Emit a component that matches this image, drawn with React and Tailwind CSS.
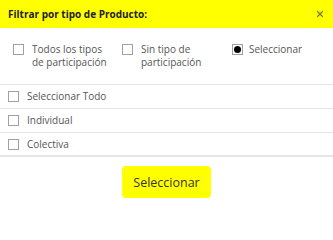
import { X } from "lucide-react";

function Box({ checked }) {
  return (
    <span className="flex h-[11px] w-[11px] shrink-0 items-center justify-center border border-[#a0a0a0] bg-white">
      {checked && <span className="h-[7px] w-[7px] rounded-full bg-black" />}
    </span>
  );
}

export default function App() {
  const rows = ["Seleccionar Todo", "Individual", "Colectiva"];

  return (
    <div className="h-[207px] w-[333px] bg-white text-[10px] leading-[13px] text-[#555] [font-family:'Open_Sans',sans-serif]">
      {/* Header */}
      <div className="flex h-[28px] items-center justify-between bg-[#ffff00] pl-[8px] pr-[8px]">
        <span className="font-bold text-[#222]">Filtrar por tipo de Producto:</span>
        <X className="h-[10px] w-[10px] text-[#7a7a3a]" strokeWidth={3} />
      </div>

      {/* Options */}
      <div className="flex h-[56px] items-start pl-[13px] pt-[15px]">
        <label className="flex w-[109px] items-start gap-[8px]">
          <span className="mt-[1px]"><Box /></span>
          <span>Todos los tipos<br />de participación</span>
        </label>
        <label className="flex w-[110px] items-start gap-[8px]">
          <span className="mt-[1px]"><Box /></span>
          <span>Sin tipo de<br />participación</span>
        </label>
        <label className="flex items-start gap-[6px]">
          <span className="mt-[1px]"><Box checked /></span>
          <span>Seleccionar</span>
        </label>
      </div>

      {/* List */}
      <div className="border-t border-[#e6e6e6]">
        {rows.map((r) => (
          <div key={r} className="flex h-[24px] items-center gap-[8px] border-b border-[#e6e6e6] pl-[8px] last:border-b-2">
            <Box />
            <span>{r}</span>
          </div>
        ))}
      </div>

      {/* Footer */}
      <div className="flex justify-center pt-[9px]">
        <button className="h-[32px] w-[89px] rounded-[4px] bg-[#ffff00] text-[12.5px] text-[#333]">
          Seleccionar
        </button>
      </div>
    </div>
  );
}
